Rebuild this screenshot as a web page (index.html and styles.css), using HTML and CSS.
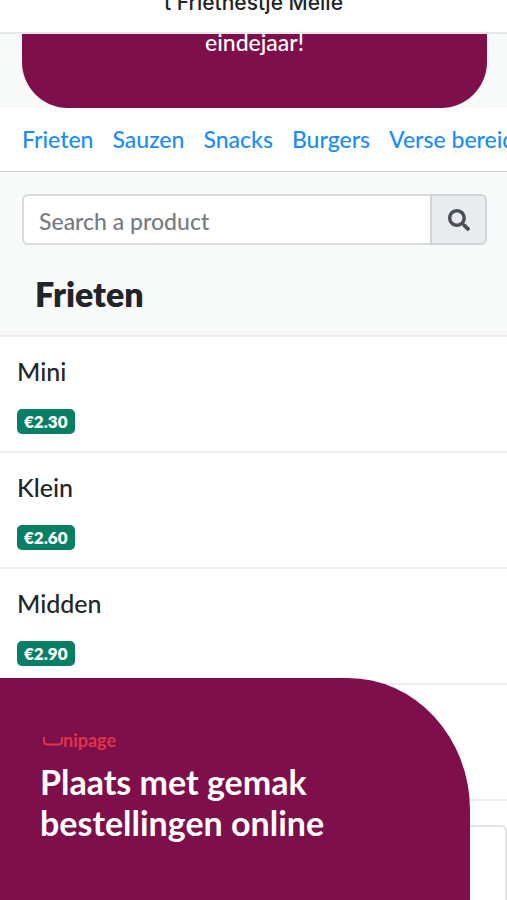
FILE: index.html
```html
<!DOCTYPE html>
<html lang="nl">
<head>
<meta charset="utf-8">
<meta name="viewport" content="width=device-width, initial-scale=1">
<title>'t Frietnestje Melle</title>
<link rel="stylesheet" href="styles.css">
</head>
<body>
<header class="topbar">t Frietnestje Melle</header>
<main>
  <section class="notice"><p class="notice-card">eindejaar!</p></section>
  <nav class="categories">
    <a href="#frieten">Frieten</a>
    <a href="#sauzen">Sauzen</a>
    <a href="#snacks">Snacks</a>
    <a href="#burgers">Burgers</a>
    <a href="#verse">Verse bereid</a>
  </nav>
  <form class="search">
    <input class="search-input" type="search" placeholder="Search a product" aria-label="Search a product">
    <button class="search-button" type="button" aria-label="Search">
      <svg viewBox="0 0 512 512" width="22" height="22" aria-hidden="true"><path fill="currentColor" d="M505 442.700L405.300 343c-4.500-4.500-10.600-7-17-7H372c27.600-35.300 44-79.700 44-128C416 93.100 322.900 0 208 0S0 93.100 0 208s93.100 208 208 208c48.300 0 92.700-16.400 128-44v16.300c0 6.400 2.500 12.500 7 17l99.700 99.700c9.400 9.400 24.600 9.400 33.900 0l28.300-28.300c9.400-9.400 9.400-24.600.1-34zM208 336c-70.700 0-128-57.200-128-128 0-70.700 57.200-128 128-128 70.700 0 128 57.200 128 128 0 70.700-57.200 128-128 128z"/></svg>
    </button>
  </form>
  <h1 class="section-title" id="frieten">Frieten</h1>
  <ul class="products">
    <li class="product"><h2 class="product-name">Mini</h2><span class="price">€2.30</span></li>
    <li class="product"><h2 class="product-name">Klein</h2><span class="price">€2.60</span></li>
    <li class="product"><h2 class="product-name">Midden</h2><span class="price">€2.90</span></li>
    <li class="product"></li>
  </ul>
  <div class="order"><div class="order-card"></div></div>
</main>
<aside class="promo">
  <p class="brand">
    <svg class="brand-mark" viewBox="0 0 20 9" width="20" height="9" aria-hidden="true"><path d="M1 0V4Q1 7.500 5 7.500H15Q19 7.500 19 4V0" fill="none" stroke="currentColor" stroke-width="2"/></svg><span>nipage</span>
  </p>
  <p class="promo-title">Plaats met gemak<br>bestellingen online</p>
</aside>
</body>
</html>
```
FILE: styles.css
```css
* {
  box-sizing: border-box;
}

body {
  display: flex;
  flex-direction: column;
  height: 100vh;
  margin: 0;
  overflow: hidden;
  background: #f8faf9;
  color: #212529;
  font-family: Lato, "Liberation Sans", sans-serif;
  font-size: 23px;
  font-weight: 500;
}

h1, h2, p, ul {
  margin: 0;
  padding: 0;
}

/* The bar is scrolled partly out of view */
.topbar {
  margin-top: -12px;
  padding-bottom: 14px;
  border-bottom: 2px solid #e6e7e9;
  background: #fff;
  font-family: Inter, sans-serif;
  font-size: 21px;
  line-height: 30px;
  text-align: center;
}

main {
  display: flex;
  flex: 1;
  flex-direction: column;
  min-height: 0;
}

.notice {
  padding: 0 20px 0 22px;
}

.notice-card {
  padding-bottom: 58px;
  border-radius: 0 0 46px 46px;
  background: #7e0f4b;
  color: #fff;
  line-height: 16px;
  text-align: center;
}

.categories {
  display: flex;
  gap: 19px;
  padding: 15px 0 16px 22px;
  overflow: hidden;
  border-bottom: 1px solid #cfd2d4;
  background: #fff;
  line-height: 32px;
  white-space: nowrap;
}

.categories a {
  color: #1a8df5;
  text-decoration: none;
}

.search {
  display: flex;
  padding: 22px 20px 0 22px;
}

.search-input {
  flex: 1;
  min-width: 0;
  height: 51px;
  padding: 2px 15px 0;
  border: 2px solid #d8dbde;
  border-right: 0;
  border-radius: 6px 0 0 6px;
  background: #fff;
  color: #495057;
  font: inherit;
  appearance: none;
}

.search-input::placeholder {
  color: #777b7f;
  opacity: 1;
}

.search-button {
  display: flex;
  align-items: center;
  justify-content: center;
  width: 57px;
  padding: 0;
  border: 2px solid #d0d4d8;
  border-radius: 0 6px 6px 0;
  background: #e9ecef;
  color: #495057;
}

.section-title {
  padding: 28px 35px 20px;
  font-size: 34px;
  font-weight: 800;
  line-height: 42px;
}

.products {
  list-style: none;
  border-top: 2px solid #ececee;
  background: #fff;
}

.product {
  display: flex;
  flex-direction: column;
  align-items: flex-start;
  gap: 22px;
  min-height: 116px;
  padding: 18px 17px 0;
  border-bottom: 2px solid #ececee;
}

.product-name {
  font-size: 25px;
  font-weight: 500;
  line-height: 32px;
}

.price {
  padding: 1px 7px 0;
  border-radius: 5px;
  background: #067f64;
  color: #fff;
  font-size: 17px;
  font-weight: 800;
  line-height: 24px;
}

.order {
  display: flex;
  flex: 1;
  padding-top: 24px;
  background: #fff;
}

.order-card {
  flex: 1;
  border: 2px solid #e2e3e5;
  border-bottom: 0;
  border-radius: 6px 6px 0 0;
}

.promo {
  position: fixed;
  bottom: 0;
  left: 0;
  width: calc(100% - 37px);
  padding: 51px 40px 57px;
  border-top-right-radius: 122px 132px;
  background: #7e0f4b;
  color: #fff;
}

.brand {
  display: flex;
  align-items: center;
  padding-left: 3px;
  color: #e23346;
  font-size: 18px;
  font-weight: 700;
  line-height: 22px;
}

.brand-mark {
  margin-top: 3px;
}

.promo-title {
  padding-top: 10px;
  font-size: 34px;
  font-weight: 700;
  line-height: 41px;
}
```
